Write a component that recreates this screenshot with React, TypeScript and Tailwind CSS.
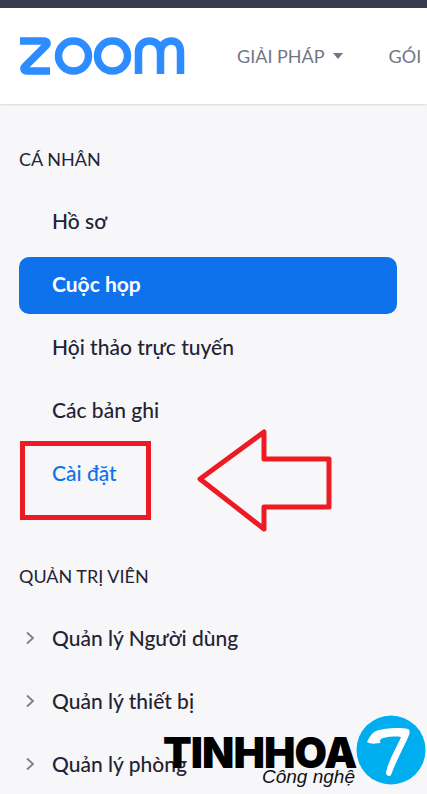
import React from 'react';

const personalItems = ['Hồ sơ', 'Cuộc họp', 'Hội thảo trực tuyến', 'Các bản ghi', 'Cài đặt'];
const adminItems = ['Quản lý Người dùng', 'Quản lý thiết bị', 'Quản lý phòng'];

const ZoomLogo = () => (
    <svg width="166" height="38" viewBox="0 0 166 38" fill="none" stroke="#2d8cff" strokeWidth="7.5" className="shrink-0">
        <path d="M1 4h24c3 0 4 2.500 2 4.500L6 29.500c-2 2-1 4.500 2 4.500h23" strokeLinejoin="round" />
        <circle cx="54.500" cy="19" r="15" />
        <circle cx="93.500" cy="19" r="15" />
        <path d="M119.500 37V15c0-6.500 5-11 11-11s11 4.500 11 11v22M141.500 15c0-6.500 5-11 11-11s9 4.500 9 11v22" />
    </svg>
);

const Chevron = () => (
    <svg width="10" height="14" viewBox="0 0 10 14" fill="none" stroke="#7d7d92" strokeWidth="1.800" className="shrink-0">
        <path d="M2 1.500 8 7l-6 5.500" />
    </svg>
);

export default function App() {
    return (
        <div className="relative h-[794px] w-[427px] overflow-hidden bg-[#f7f7fa] font-['Lato',sans-serif]">
            <div className="h-2 bg-[#393a4f]" />

            {/* Header */}
            <header className="flex h-[96px] items-center overflow-hidden whitespace-nowrap bg-white pl-[19px] shadow-[0_1px_2px_rgba(0,0,0,0.12)]">
                <ZoomLogo />
                <span className="ml-[52px] text-[18px] text-[#747487]">GIẢI PHÁP</span>
                <span className="ml-2 h-0 w-0 border-x-[5.500px] border-t-[6px] border-x-transparent border-t-[#747487]" />
                <span className="ml-[46px] text-[18px] text-[#747487]">GÓI</span>
            </header>

            {/* Sidebar */}
            <nav className="pl-[19px] pr-[30px] pt-[43px] text-[#232333]">
                <h2 className="h-6 text-[18px] leading-6">CÁ NHÂN</h2>
                <ul className="mt-[23px] flex flex-col gap-[6px]">
                    {personalItems.map((item) => (
                        <li
                            key={item}
                            className={
                                item === 'Cuộc họp'
                                    ? 'flex h-[57px] items-center rounded-[10px] bg-[#0e72ed] pb-[4px] pl-[33px] text-[21px] font-bold text-white'
                                    : item === 'Cài đặt'
                                      ? 'flex h-[57px] items-center pb-[4px] pl-[33px] text-[21px] font-medium text-[#0e72ed]'
                                      : 'flex h-[57px] items-center pb-[4px] pl-[33px] text-[21px] font-medium'
                            }
                        >
                            {item}
                        </li>
                    ))}
                </ul>

                <h2 className="mt-[61px] h-6 text-[18px] leading-6">QUẢN TRỊ VIÊN</h2>
                <ul className="mt-[21px] flex flex-col gap-[6px]">
                    {adminItems.map((item) => (
                        <li key={item} className="flex h-[57px] items-center gap-[17px] pl-[6px] text-[21px] font-medium">
                            <Chevron />
                            {item}
                        </li>
                    ))}
                </ul>
            </nav>

            {/* Red annotation */}
            <div className="absolute left-[20px] top-[441px] h-[79px] w-[131px] border-[5px] border-[#ed1c24]" />
            <svg width="140" height="104" viewBox="0 0 140 104" fill="none" stroke="#ed1c24" strokeWidth="5" strokeLinejoin="round" className="absolute left-[194px] top-[428px]">
                <path d="M6 51 70 4v27h65v48H70v22z" />
            </svg>

            {/* Watermark */}
            <div className="absolute left-[163px] top-[730px] whitespace-nowrap font-['Inter',sans-serif] text-[42px] leading-[46px] font-black tracking-[-1px] text-black">
                TINHHOA
            </div>
            <div className="absolute left-[262px] top-[765px] whitespace-nowrap font-['Liberation_Sans',sans-serif] text-[19px] leading-[24px] italic text-[#111]">
                Công nghệ
            </div>
            <svg width="70" height="70" viewBox="0 0 70 70" className="absolute left-[356px] top-[715px]">
                <circle cx="35" cy="35" r="34.500" fill="#00aeef" />
                <path d="M11 27c3-6 5-9 9-11 8-3 24-4 32-2 2 1 2 3 1 6-4 10-12 24-18 40-1 2-5 1-5-2 2-12 11-26 15-36-7-1-16 0-20 2-1 1-2 3 0 4-4 0-9 2-14-1z" fill="#fff" />
            </svg>
        </div>
    );
}
